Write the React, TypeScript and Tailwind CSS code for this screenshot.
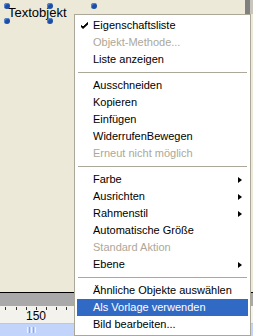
import React from "react";

type Item =
  | { sep: true }
  | {
      sep?: false;
      label: string;
      disabled?: boolean;
      checked?: boolean;
      sub?: boolean;
      active?: boolean;
    };

const items: Item[] = [
  { label: "Eigenschaftsliste", checked: true },
  { label: "Objekt-Methode...", disabled: true },
  { label: "Liste anzeigen" },
  { sep: true },
  { label: "Ausschneiden" },
  { label: "Kopieren" },
  { label: "Einfügen" },
  { label: "WiderrufenBewegen" },
  { label: "Erneut nicht möglich", disabled: true },
  { sep: true },
  { label: "Farbe", sub: true },
  { label: "Ausrichten", sub: true },
  { label: "Rahmenstil", sub: true },
  { label: "Automatische Größe" },
  { label: "Standard Aktion", disabled: true },
  { label: "Ebene", sub: true },
  { sep: true },
  { label: "Ähnliche Objekte auswählen" },
  { label: "Als Vorlage verwenden", active: true },
  { label: "Bild bearbeiten..." },
];

const Handle = ({ x, y }: { x: number; y: number }) => (
  <span
    className="absolute w-[6px] h-[6px] rounded-full bg-[#1c4ea6] shadow-[inset_1px_1px_0_#5a86d0]"
    style={{ left: x - 3, top: y - 3 }}
  />
);

const ContextMenu = () => (
  <div className="absolute left-[74px] top-[14px] w-[177px] border border-[#aca899] bg-white py-[2px] font-['Liberation_Sans',Arial,sans-serif] text-[11px]">
    {items.map((it, i) =>
      it.sep ? (
        <div key={i} className="h-[9px] flex items-center px-[3px]">
          <div className="h-px w-full bg-[#aca899]" />
        </div>
      ) : (
        <div
          key={i}
          className={`h-[17px] mx-[2px] flex items-center pr-[6px] ${
            it.active ? "bg-[#316ac5] text-white" : it.disabled ? "text-[#aca899]" : "text-black"
          }`}
        >
          <span className="w-[16px] h-full flex items-center pl-[4px]">
            {it.checked && (
              <svg width="8" height="7" viewBox="0 0 8 7">
                <path d="M0 3 L2 5 L7 0 L7 2.5 L2 7 L0 5 Z" fill="#000" />
                <path d="M0.5 3.5 L2 5 L7 0.5" stroke="#000" strokeWidth="1" fill="none" />
              </svg>
            )}
          </span>
          <span className="flex-1 whitespace-nowrap leading-none">{it.label}</span>
          {it.sub && (
            <span className="w-0 h-0 border-y-[3.5px] border-y-transparent border-l-[4px] border-l-black" />
          )}
        </div>
      )
    )}
  </div>
);

export default function App() {
  const ticks = [5, 16, 26, 36, 46, 56, 66];
  return (
    <div className="relative w-[253px] h-[336px] overflow-hidden bg-[#ece9d8] flex flex-col">
      <div className="relative flex-1">
        <span className="absolute left-[8px] top-[5px] text-[13px] leading-[15px] text-black font-['Liberation_Sans',Arial,sans-serif]">
          Textobjekt
        </span>
        <Handle x={7} y={6} />
        <Handle x={50} y={6} />
        <Handle x={94} y={6} />
        <Handle x={7} y={21} />
        <Handle x={50} y={21} />
        <div className="absolute right-0 top-0 h-[14px] flex">
          <div className="w-[5px] bg-[#808080]" />
          <div className="w-[3px] bg-[#c8c6bc]" />
        </div>
      </div>
      <div className="h-px bg-black" />
      <div className="h-[13px] bg-[#a9a9a9]" />
      <div className="relative h-[17px] bg-[#f3f2ec]">
        {ticks.map((x) => (
          <span key={x} className="absolute top-[1px] w-px h-[3px] bg-[#333]" style={{ left: x }} />
        ))}
        <span className="absolute left-[26px] top-[3px] text-[12px] leading-[14px] text-black font-['Liberation_Sans',Arial,sans-serif]">
          150
        </span>
      </div>
      <div className="h-px bg-[#b9c8e8]" />
      <div className="h-[12px] bg-[#c3d4fb] flex items-center pl-[27px] gap-[1px]">
        <span className="w-px h-[6px] bg-[#eef3ff]" />
        <span className="w-px h-[6px] bg-[#8fa9e3]" />
        <span className="w-px h-[6px] bg-[#eef3ff]" />
        <span className="w-px h-[6px] bg-[#8fa9e3]" />
        <span className="w-px h-[6px] bg-[#eef3ff]" />
      </div>
      <ContextMenu />
    </div>
  );
}
